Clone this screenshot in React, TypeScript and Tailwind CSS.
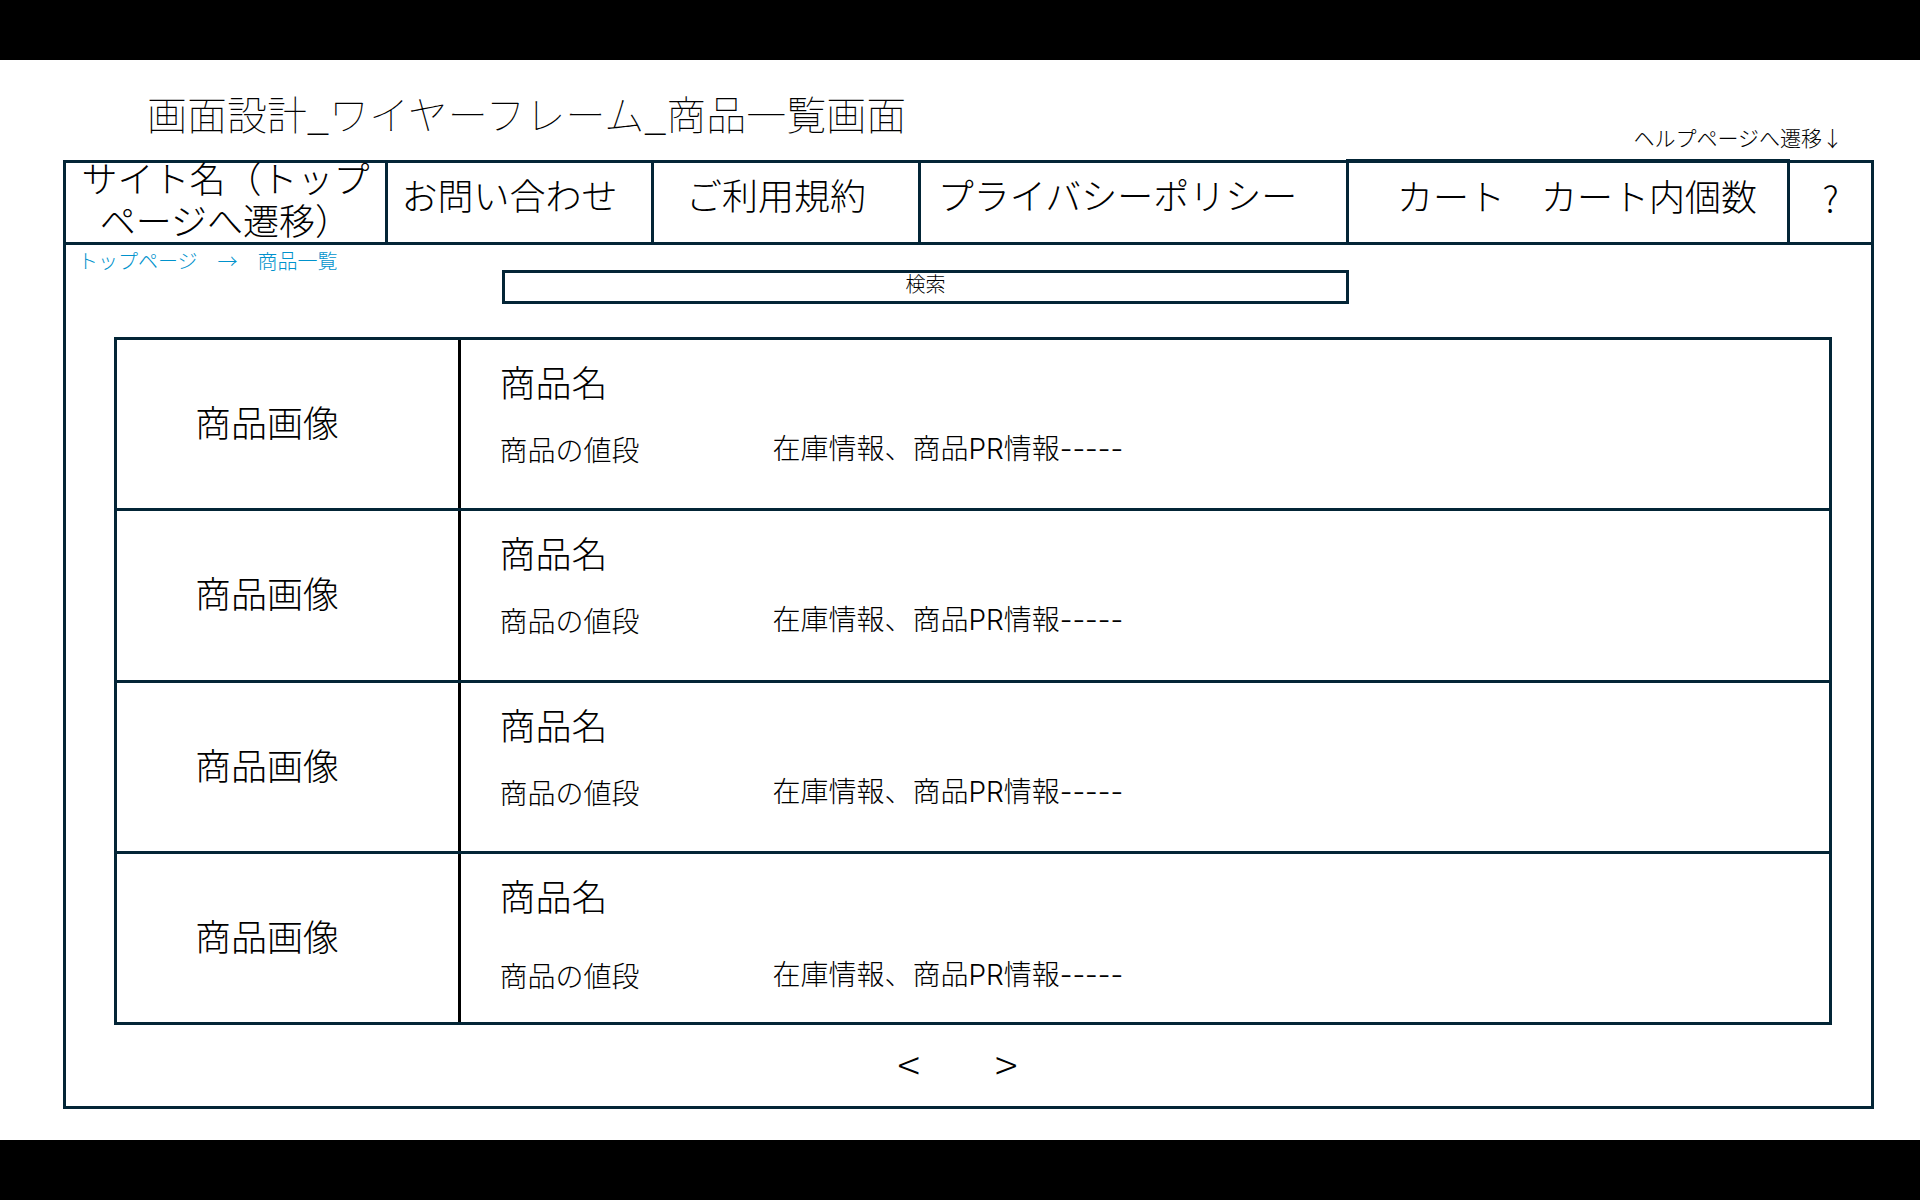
type Product = { name: string; price: string; info: string; loose?: boolean };

const product: Product = {
  name: "商品名",
  price: "商品の値段",
  info: "在庫情報、商品PR情報-----",
};

const products: Product[] = [product, product, product, { ...product, loose: true }];

const line = "border-[#032536]";

function ProductRow({ name, price, info, loose }: Product) {
  return (
    <li className={`grid grid-cols-[345fr_1370fr] border-b-3 ${line}`}>
      <div className="flex items-center border-r-3 border-black pb-1.5 pl-[78px] text-4xl">商品画像</div>
      <div className="pt-[17px] pl-[38px]">
        <h2 className="text-4xl leading-[48px]">{name}</h2>
        <div className={`grid grid-cols-[273px_1fr] text-[28px] leading-[40px] ${loose ? "mt-9" : "mt-6"}`}>
          <p>{price}</p>
          <p className="font-['Inter','Noto_Sans_CJK_JP',sans-serif]">{info}</p>
        </div>
      </div>
    </li>
  );
}

export default function App() {
  return (
    <div className="flex min-h-screen flex-col border-y-60 border-black bg-white font-['Noto_Sans_CJK_JP',sans-serif] font-light text-black">
      <div className="flex items-end justify-between pr-[77px] pl-[147px]">
        <h1 className="pt-6 pb-[18px] text-[40px] leading-[58px] font-thin">
          画面設計_ワイヤーフレーム_商品一覧画面
        </h1>
        <p className="pb-2 text-[21px] leading-[30px]">ヘルプページへ遷移↓</p>
      </div>

      <div className={`mr-[46px] mb-[31px] ml-[63px] flex flex-1 flex-col border-3 ${line}`}>
        <nav
          className={`grid h-[82px] grid-cols-[322fr_266fr_267fr_428fr_441fr_81fr] grid-rows-[minmax(0,1fr)] border-b-3 text-4xl leading-[42px] whitespace-nowrap ${line}`}
        >
          <a href="#top" className={`flex items-center justify-center border-r-3 pb-2.5 text-center ${line}`}>
            <span>
              サイト名（トップ
              <br />
              ページへ遷移）
            </span>
          </a>
          <a href="#contact" className={`flex items-center justify-center border-r-3 pr-5 pb-[18px] ${line}`}>
            お問い合わせ
          </a>
          <a href="#terms" className={`flex items-center justify-center border-r-3 pr-5 pb-[18px] ${line}`}>
            ご利用規約
          </a>
          <a href="#privacy" className={`flex items-center justify-center border-r-3 pr-8 pb-[18px] ${line}`}>
            プライバシーポリシー
          </a>
          <a
            href="#cart"
            className={`-mt-1 -ml-[3px] flex items-center justify-center border-t-4 border-r-3 border-l-3 pb-4 pl-[18px] ${line}`}
          >
            カート　カート内個数
          </a>
          <a href="#help" className="flex items-center justify-center pb-3">
            ?
          </a>
        </nav>

        <div className="relative">
          <p className="absolute top-0 left-3 flex gap-5 text-xl leading-[32px] text-[#0092cc]">
            <a href="#top">トップページ</a>
            <span>→</span>
            <a href="#list">商品一覧</a>
          </p>
        </div>

        <div className="grid grid-cols-[436fr_847fr_522fr] pt-[25px]">
          <input
            type="text"
            aria-label="検索"
            placeholder="検索"
            className={`col-start-2 h-[34px] border-3 pb-2 text-center text-xl leading-5 outline-none placeholder:text-black ${line}`}
          />
        </div>

        <ul className={`mt-[33px] mr-[39px] ml-12 grid h-[688px] auto-rows-fr border-3 border-b-0 ${line}`}>
          {products.map((item, i) => (
            <ProductRow key={i} {...item} />
          ))}
        </ul>

        <div className="flex justify-center gap-[75px] pt-3.5 pr-[22px] text-[42px] leading-[48px]">
          <button type="button" aria-label="前のページ">
            &lt;
          </button>
          <button type="button" aria-label="次のページ">
            &gt;
          </button>
        </div>
      </div>
    </div>
  );
}
